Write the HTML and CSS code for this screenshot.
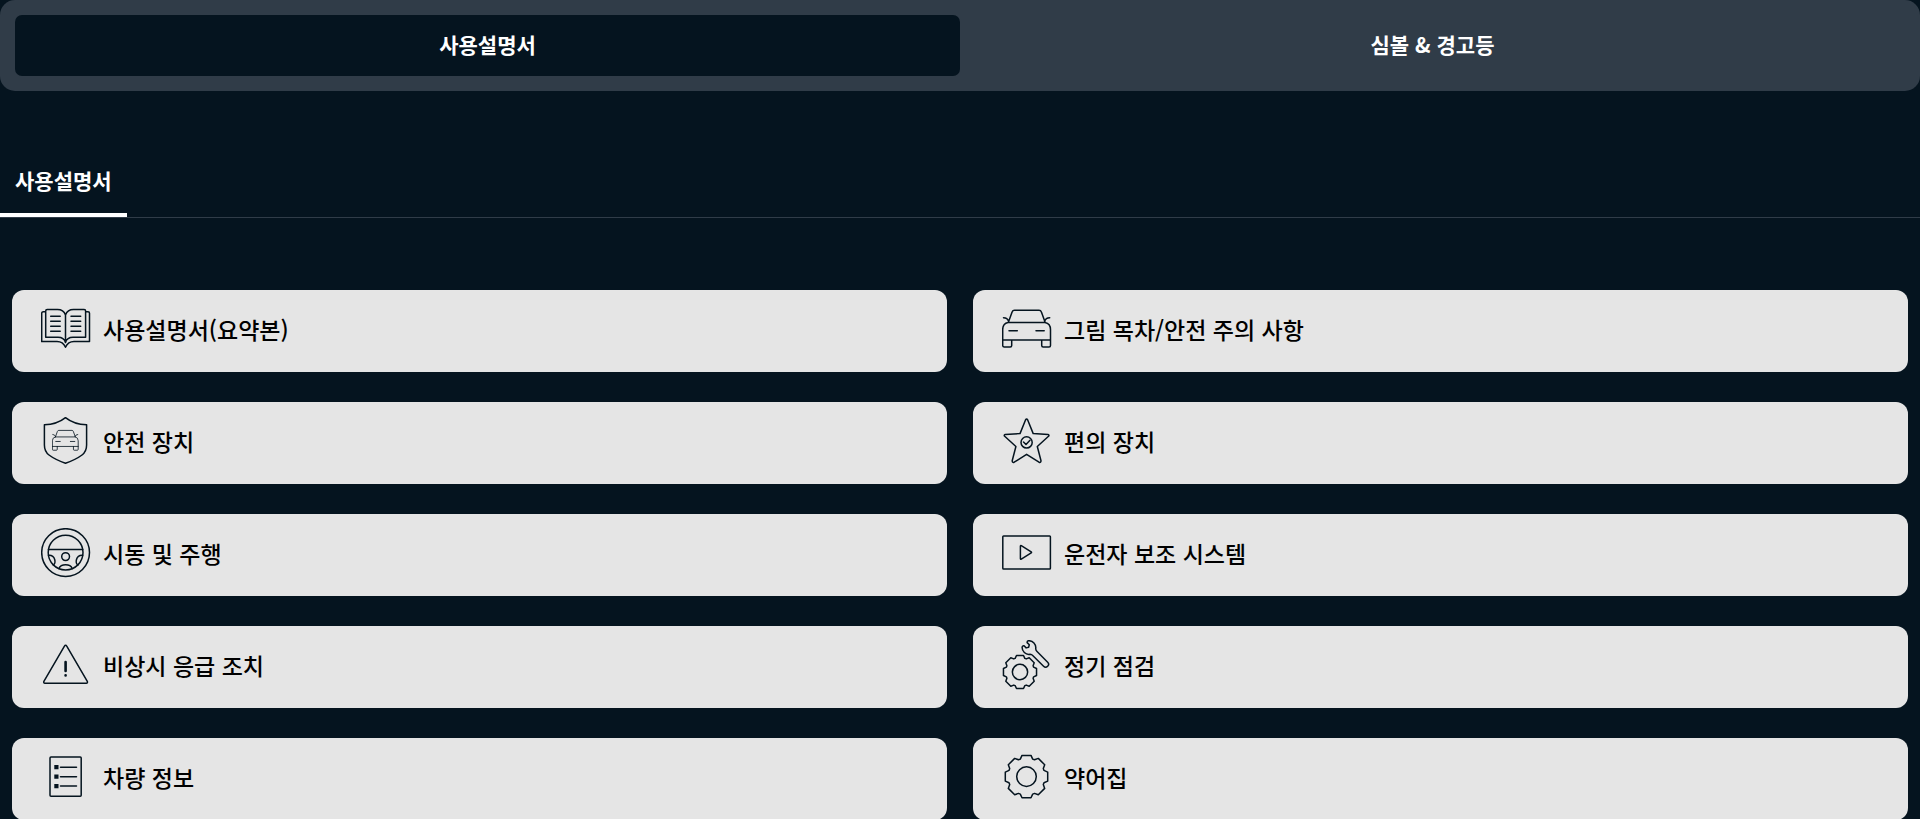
FILE: index.html
```
<!DOCTYPE html>
<html lang="ko">
<head>
    <meta charset="UTF-8">
    <meta name="viewport" content="width=device-width, initial-scale=1.0">
    <title>사용설명서</title>
    <link rel="stylesheet" href="styles.css">
</head>
<body>
    <!-- shared shapes -->
    <svg class="defs" width="0" height="0" aria-hidden="true">
        <symbol id="car" viewBox="0 0 50 50">
            <path d="M6.3 18.5 10 8.2Q10.7 6.3 12.5 6.3H37Q38.8 6.3 39.5 8.2L43.2 18.5M6 18.4H43Q48.5 19.5 48.5 25.5V41.5Q48.5 43 47 43H41.2Q39.7 43 39.7 41.5V36M.7 36H48.5M9.7 36V41.5Q9.7 43 8.2 43H2.2Q.7 43 .7 41.5V25.5Q.7 19.5 6 18.4M1.5 13.8Q5.5 13.8 6.6 17.5M47.7 13.8Q43.7 13.8 42.6 17.5M7 26.8H15.3M34 26.8H42.2"/>
        </symbol>
        <g id="gear">
            <path vector-effect="non-scaling-stroke" d="M-4.5-21.2H4.5L6.2-17.5 8-16.8 11.8-18.2 18.2-11.8 16.8-8 17.5-6.2 21.2-4.5V4.5L17.5 6.2 16.8 8 18.2 11.8 11.8 18.2 8 16.8 6.2 17.5 4.5 21.2H-4.5L-6.2 17.5-8 16.8-11.8 18.2-18.2 11.8-16.8 8-17.5 6.2-21.2 4.5V-4.5L-17.5-6.2-16.8-8-18.2-11.8-11.8-18.2-8-16.8-6.2-17.5Z"/>
            <circle vector-effect="non-scaling-stroke" r="9.8"/>
        </g>
    </svg>

    <nav class="tabs">
        <button class="tab active" type="button">사용설명서</button>
        <button class="tab" type="button">심볼 &amp; 경고등</button>
    </nav>

    <div class="sub-tabs">
        <a class="sub-tab" href="#manual">사용설명서</a>
    </div>

    <main class="menu" id="manual">
        <a class="card" href="#">
            <svg class="icon" viewBox="0 0 50 50" aria-hidden="true">
                <path d="M24.5 11Q22.5 5.5 16.5 5.5H6.2Q4.7 5.5 4.7 7V33.3H17Q23 33.3 24.5 38.5 26 33.3 32 33.3H44.6V7Q44.6 5.5 43.1 5.5H32.5Q26.5 5.5 24.5 11V38.5M4.7 7.8H2.2Q.7 7.8 .7 9.3V37.6H16Q22 37.6 24.5 43.3 27 37.6 33 37.6H48.5V9.3Q48.5 7.8 47 7.8H44.6M9.7 12.2H19.2M9.7 17.2H19.2M9.7 22.3H19.2M9.7 27.3H19.2M30 12.2H39.7M30 17.2H39.7M30 22.3H39.7M30 27.3H39.7"/>
            </svg>
            <span>사용설명서(요약본)</span>
        </a>
        <a class="card" href="#">
            <svg class="icon" viewBox="0 0 50 50" aria-hidden="true"><use href="#car"/></svg>
            <span>그림 목차/안전 주의 사항</span>
        </a>
        <a class="card" href="#">
            <svg class="icon" viewBox="0 0 50 50" aria-hidden="true">
                <path d="M24.5 1.7Q16 8.5 3.4 8.8V29Q3.4 35.5 8 39 14 43.5 24.5 47.3 35 43.5 41 39 45.6 35.5 45.6 29V8.8Q33 8.5 24.5 1.7Z"/>
                <use href="#car" x="11" y="11" width="27" height="27"/>
            </svg>
            <span>안전 장치</span>
        </a>
        <a class="card" href="#">
            <svg class="icon" viewBox="0 0 50 50" aria-hidden="true">
                <path d="M23.5 4Q24.6 2.2 25.7 4L31.2 17.6 46 18.5Q47.6 19 46.5 20.3L35.3 30.5 39 44.8Q39 46.9 37 46.2L24.6 38.3 12.2 46.2Q10.2 46.9 10.2 44.8L13.9 30.5 2.7 20.3Q1.6 19 3.2 18.5L18 17.6Z"/>
                <circle cx="24.6" cy="26.4" r="5.6"/>
                <path d="M21.5 26 24 28.5 28 24.3"/>
            </svg>
            <span>편의 장치</span>
        </a>
        <a class="card" href="#">
            <svg class="icon" viewBox="0 0 50 50" aria-hidden="true">
                <circle cx="24.6" cy="24.6" r="23.9"/>
                <circle cx="24.6" cy="24.6" r="17.4"/>
                <circle cx="24.6" cy="28.6" r="3.9"/>
                <path d="M7.5 21.4H41.7M7.5 27.3Q12.5 27 13.7 31.5 14.8 35.5 12.2 37M41.7 27.3Q36.7 27 35.5 31.5 34.4 35.5 37 37M18 40.5Q19.5 36.8 24.6 36.8 29.7 36.8 31.2 40.5"/>
            </svg>
            <span>시동 및 주행</span>
        </a>
        <a class="card" href="#">
            <svg class="icon" viewBox="0 0 50 50" aria-hidden="true">
                <rect x=".8" y="8" width="47.6" height="33" rx=".8"/>
                <path d="M18.4 18.2Q18.4 17.2 19.3 17.7L29.2 23.9Q29.9 24.4 29.2 24.9L19.3 31.1Q18.4 31.6 18.4 30.6Z"/>
            </svg>
            <span>운전자 보조 시스템</span>
        </a>
        <a class="card" href="#">
            <svg class="icon" viewBox="0 0 50 50" aria-hidden="true">
                <path d="M23.3 6.3Q24.6 4.4 25.9 6.3L46.3 41.3Q47 43.1 45.2 43.3H4Q2.2 43.1 2.9 41.3Z"/>
                <path class="bold" d="M24.6 22V31M24.6 35.3V35.4"/>
            </svg>
            <span>비상시 응급 조치</span>
        </a>
        <a class="card" href="#">
            <svg class="icon" viewBox="0 0 50 50" aria-hidden="true">
                <use href="#gear" transform="translate(18 32) scale(.78)"/>
                <path transform="translate(27 7.6) rotate(45)" d="M5.5-4Q6.7-2.9 8.5-2.9H23.5A2.9 2.9 0 0 1 23.5 2.9H8.5Q6.7 2.9 5.5 4A6.9 6.9 0 0 1-5.3 4.4Q-6 3-4.8 2.2H-1.8L-.5 0-1.8-2.2H-4.8Q-6-3-5.3-4.4A6.9 6.9 0 0 1 5.5-4Z"/>
            </svg>
            <span>정기 점검</span>
        </a>
        <a class="card" href="#">
            <svg class="icon" viewBox="0 0 50 50" aria-hidden="true">
                <rect x="9" y="5" width="31.2" height="39.2" rx="1"/>
                <path d="M19.5 15.2H35.5M19.5 24.7H35.5M19.5 34.1H35.5"/>
                <path class="fill" d="M13.3 13.1h4.2v4.2h-4.2zM13.3 22.6h4.2v4.2h-4.2zM13.3 32h4.2v4.2h-4.2z"/>
            </svg>
            <span>차량 정보</span>
        </a>
        <a class="card" href="#">
            <svg class="icon" viewBox="0 0 50 50" aria-hidden="true"><use href="#gear" transform="translate(24.5 24.6)"/></svg>
            <span>약어집</span>
        </a>
    </main>
</body>
</html>
```
FILE: styles.css
```
* {
    box-sizing: border-box;
}
body {
    margin: 0;
    background-color: #05141f;
    color: #fff;
    font-family: "Noto Sans CJK KR", sans-serif;
}
a {
    color: inherit;
    text-decoration: none;
}
.defs {
    position: absolute;
}
.tabs {
    display: flex;
    padding: 15px;
    border-radius: 15px;
    background-color: #303c48;
}
.tab {
    flex: 1;
    height: 61px;
    padding: 0 0 4px;
    border: none;
    border-radius: 7px;
    background: none;
    color: #fff;
    font-family: inherit;
    font-size: 21px;
    font-weight: 700;
    line-height: 30px;
    cursor: pointer;
}
.tab.active {
    background-color: #05141f;
}
.sub-tabs {
    display: flex;
    margin-top: 60px;
    border-bottom: 1px solid #303c48;
}
.sub-tab {
    padding: 14px 15px 18px;
    border-bottom: 4px solid #fff;
    font-size: 21px;
    font-weight: 700;
    line-height: 30px;
}
.menu {
    display: grid;
    grid-template-columns: 1fr 1fr;
    gap: 30px 26px;
    padding: 72px 12px 0;
}
.card {
    display: flex;
    align-items: center;
    gap: 12px;
    padding: 14px 29px 18px;
    border-radius: 12px;
    background-color: #e5e5e5;
    color: #000;
    font-size: 23px;
    font-weight: 500;
    line-height: 30px;
}
.icon {
    width: 50px;
    height: 50px;
    fill: none;
    stroke: #05141f;
    stroke-width: 1.5;
    stroke-linecap: round;
    stroke-linejoin: round;
}
.icon .bold {
    stroke-width: 2.6;
}
.icon .fill {
    fill: #05141f;
    stroke: none;
}
```
